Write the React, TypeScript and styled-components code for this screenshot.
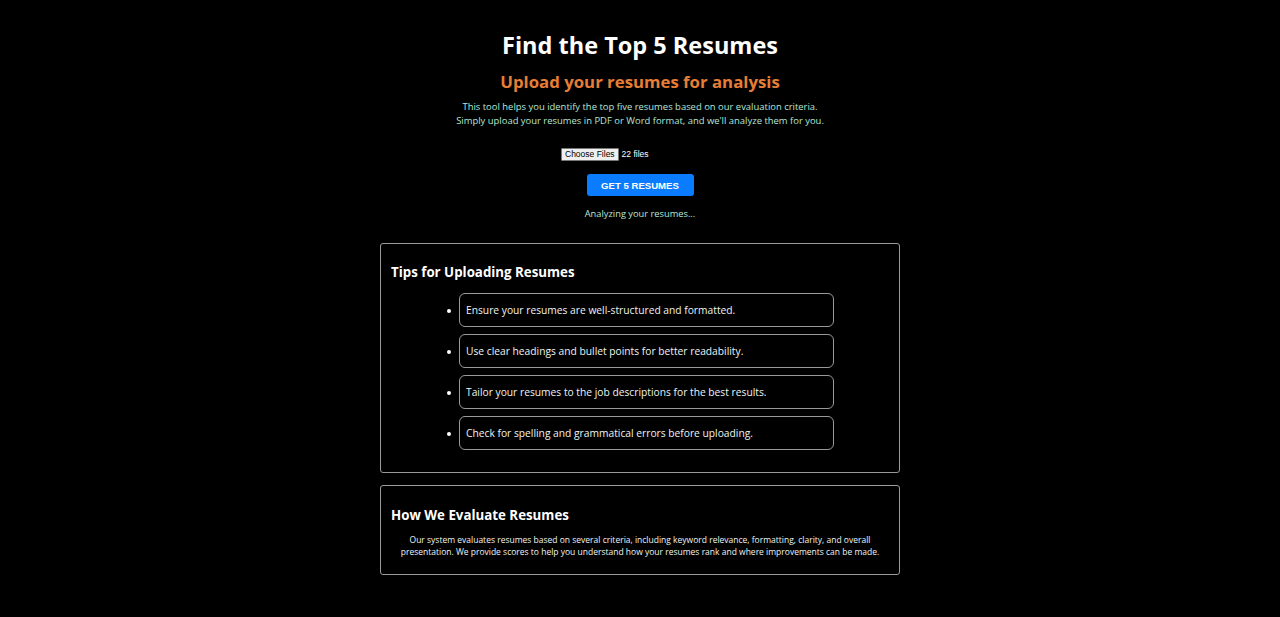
import React from "react";
import styled, { createGlobalStyle } from "styled-components";

const Global = createGlobalStyle`
  html, body { margin: 0; padding: 0; background: #000; }
  body { font-family: "Open Sans", "Noto Sans", sans-serif; color: #fff; }
`;

const Page = styled.main`
  display: flex;
  flex-direction: column;
  align-items: center;
  padding-top: 30px;
  min-height: 617px;
  box-sizing: border-box;
`;

const Title = styled.h1`
  margin: 0;
  font-size: 23.5px;
  line-height: 30px;
  font-weight: 700;
  color: #fff;
`;

const Subtitle = styled.h2`
  margin: 10px 0 0;
  font-size: 16.8px;
  line-height: 24px;
  font-weight: 700;
  color: #e67e35;
`;

const Intro = styled.p`
  margin: 6px 0 0;
  font-size: 9.45px;
  line-height: 14px;
  text-align: center;
  color: #b5e6d6;
`;

const FileRow = styled.div`
  margin-top: 20px;
  width: 158px;
  display: flex;
  align-items: center;
  gap: 3px;
  height: 12px;
  font-family: "Liberation Sans", Arial, sans-serif;
  font-size: 8.5px;
`;

const FileButton = styled.span`
  display: inline-flex;
  align-items: center;
  height: 11px;
  padding: 0 3px;
  background: #efefef;
  color: #000;
  border: 1px solid #767676;
  border-radius: 1px;
`;

const FileCount = styled.span`
  color: #fff;
`;

const SubmitButton = styled.button`
  margin-top: 14px;
  width: 107px;
  height: 22px;
  border: none;
  border-radius: 3px;
  background: #0a7cff;
  color: #fff;
  font-family: "Liberation Sans", Arial, sans-serif;
  font-weight: 700;
  font-size: 9.6px;
  cursor: pointer;
`;

const Status = styled.p`
  margin: 11px 0 0;
  font-size: 9.3px;
  line-height: 14px;
  color: #b5e6d6;
`;

const Card = styled.section<{ $top: number; $bottom: number }>`
  margin-top: ${(p) => p.$top}px;
  width: 520px;
  box-sizing: border-box;
  border: 1px solid #9a9a9a;
  border-radius: 3px;
  padding: 19px 10px ${(p) => p.$bottom}px;
`;

const CardTitle = styled.h3<{ $shift?: number }>`
  margin: ${(p) => p.$shift ?? 0}px 0 0;
  font-size: 13.3px;
  line-height: 18px;
  font-weight: 700;
  color: #fff;
`;

const TipList = styled.ul`
  margin: 12px 0 0;
  padding: 0 0 0 68px;
  display: flex;
  flex-direction: column;
  gap: 7px;
  color: #fff;
`;

const Tip = styled.li`
  width: 375px;
  height: 34px;
  box-sizing: border-box;
  border: 1px solid #9a9a9a;
  border-radius: 6px;
  padding: 0 6px;
  display: flex;
  align-items: center;
  font-size: 10.25px;
  color: #eef4f2;
  position: relative;
  &::before {
    content: "";
    position: absolute;
    left: -13px;
    top: 15px;
    width: 4px;
    height: 4px;
    border-radius: 50%;
    background: #fff;
  }
`;

const CardText = styled.p`
  margin: 10px 0 0;
  font-size: 8.5px;
  line-height: 12px;
  text-align: center;
  color: #eef4f2;
`;

const tips = [
  "Ensure your resumes are well-structured and formatted.",
  "Use clear headings and bullet points for better readability.",
  "Tailor your resumes to the job descriptions for the best results.",
  "Check for spelling and grammatical errors before uploading.",
];

export default function App() {
  return (
    <>
      <Global />
      <Page>
        <Title>Find the Top 5 Resumes</Title>
        <Subtitle>Upload your resumes for analysis</Subtitle>
        <Intro>
          This tool helps you identify the top five resumes based on our evaluation criteria.
          <br />
          Simply upload your resumes in PDF or Word format, and we'll analyze them for you.
        </Intro>
        <FileRow>
          <FileButton>Choose Files</FileButton>
          <FileCount>22 files</FileCount>
        </FileRow>
        <SubmitButton>GET 5 RESUMES</SubmitButton>
        <Status>Analyzing your resumes...</Status>
        <Card $top={22} $bottom={22}>
          <CardTitle>Tips for Uploading Resumes</CardTitle>
          <TipList>
            {tips.map((t) => (
              <Tip key={t}>{t}</Tip>
            ))}
          </TipList>
        </Card>
        <Card $top={12} $bottom={16}>
          <CardTitle $shift={1}>How We Evaluate Resumes</CardTitle>
          <CardText>
            Our system evaluates resumes based on several criteria, including keyword relevance, formatting, clarity, and overall
            <br />
            presentation. We provide scores to help you understand how your resumes rank and where improvements can be made.
          </CardText>
        </Card>
      </Page>
    </>
  );
}
